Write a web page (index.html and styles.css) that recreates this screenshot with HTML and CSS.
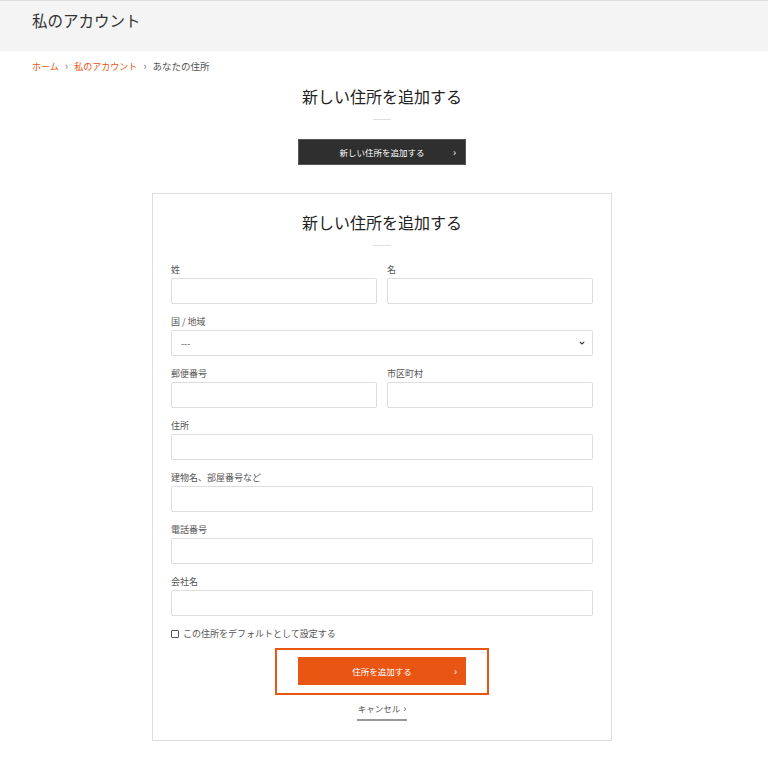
FILE: index.html
```html
<!DOCTYPE html>
<html lang="ja">
<head>
  <meta charset="UTF-8">
  <meta name="viewport" content="width=device-width, initial-scale=1.0">
  <title>私のアカウント</title>
  <link rel="stylesheet" href="styles.css">
</head>
<body>

  <header class="page-header">
    <h1 class="page-title">私のアカウント</h1>
  </header>

  <nav class="breadcrumb">
    <a href="#">ホーム</a>
    <span class="sep">&#8250;</span>
    <a href="#">私のアカウント</a>
    <span class="sep">&#8250;</span>
    <span class="current">あなたの住所</span>
  </nav>

  <main class="content">
    <h2 class="section-title">新しい住所を追加する</h2>
    <div class="title-rule"></div>

    <button class="btn btn-dark" type="button">
      <span>新しい住所を追加する</span>
      <span class="btn-arrow">&#8250;</span>
    </button>

    <form class="address-card">
      <h2 class="section-title">新しい住所を追加する</h2>
      <div class="title-rule"></div>

      <div class="field-row">
        <label class="field">
          <span class="field-label">姓</span>
          <input type="text">
        </label>
        <label class="field">
          <span class="field-label">名</span>
          <input type="text">
        </label>
      </div>

      <label class="field">
        <span class="field-label">国 / 地域</span>
        <span class="select-wrap">
          <select>
            <option>---</option>
          </select>
          <svg class="select-icon" width="8" height="6" viewBox="0 0 8 6">
            <path d="M1.8 1.8 L4 4 L6.2 1.8" fill="none" stroke="#333" stroke-width="1.1"/>
          </svg>
        </span>
      </label>

      <div class="field-row">
        <label class="field">
          <span class="field-label">郵便番号</span>
          <input type="text">
        </label>
        <label class="field">
          <span class="field-label">市区町村</span>
          <input type="text">
        </label>
      </div>

      <label class="field">
        <span class="field-label">住所</span>
        <input type="text">
      </label>

      <label class="field">
        <span class="field-label">建物名、部屋番号など</span>
        <input type="text">
      </label>

      <label class="field">
        <span class="field-label">電話番号</span>
        <input type="text">
      </label>

      <label class="field">
        <span class="field-label">会社名</span>
        <input type="text">
      </label>

      <label class="check-row">
        <span class="check-box"></span>
        <span>この住所をデフォルトとして設定する</span>
      </label>

      <div class="submit-area">
        <div class="submit-highlight">
          <button class="btn btn-orange" type="submit">
            <span>住所を追加する</span>
            <span class="btn-arrow">&#8250;</span>
          </button>
        </div>
      </div>

      <a class="cancel-link" href="#">キャンセル <span class="cancel-arrow">&#8250;</span></a>
    </form>
  </main>

</body>
</html>
```

FILE: styles.css
```css
body {
  margin: 0;
  padding: 0;
  background-color: #ffffff;
  color: #333333;
  font-family: 'Noto Sans CJK JP', 'Noto Sans', sans-serif;
}

.page-header {
  height: 51px;
  background-color: #f4f4f4;
  border-top: 1px solid #dddddd;
  box-sizing: border-box;
  padding: 7px 0 0 32px;
}

.page-title {
  margin: 0;
  font-size: 15.5px;
  font-weight: 400;
  line-height: 24px;
  color: #333333;
}

.breadcrumb {
  height: 14px;
  padding: 7px 0 0 32px;
  font-size: 9px;
  line-height: 14px;
  color: #555555;
}

.breadcrumb a {
  color: #e95513;
  text-decoration: none;
}

.breadcrumb .sep {
  color: #777777;
  margin: 0 4px;
  font-size: 11px;
  line-height: 14px;
}

.breadcrumb .current {
  font-size: 9.5px;
}

.content {
  width: 460px;
  margin: 0 auto;
  padding: 11px 0 0 0;
  display: flex;
  flex-direction: column;
  align-items: center;
  position: relative;
  left: -2px;
}

.section-title {
  margin: 0;
  font-size: 16px;
  font-weight: 400;
  line-height: 26px;
  color: #222222;
  text-align: center;
}

.title-rule {
  width: 18px;
  height: 1px;
  background-color: #dddddd;
  margin: 10px 0 0 0;
}

.btn {
  display: flex;
  align-items: center;
  justify-content: center;
  position: relative;
  width: 168px;
  height: 28px;
  border: none;
  padding: 0;
  font-family: inherit;
  font-size: 8.5px;
  color: #ffffff;
  cursor: pointer;
}

.btn-dark {
  height: 26px;
  margin-top: 19px;
  background-color: #2f2f2f;
  border: 1px solid #555555;
}

.btn-orange {
  background-color: #e95513;
}

.btn-arrow {
  position: absolute;
  right: 9px;
  top: 50%;
  transform: translateY(-55%);
  font-size: 10px;
}

.address-card {
  width: 460px;
  box-sizing: border-box;
  margin-top: 28px;
  border: 1px solid #dddddd;
  padding: 15px 18px 19px 18px;
  display: flex;
  flex-direction: column;
  align-items: center;
}

.address-card .title-rule {
  margin-bottom: 17px;
}

.field-row {
  display: flex;
  gap: 10px;
  width: 100%;
}

.field-row .field {
  flex: 1;
}

.field {
  display: flex;
  flex-direction: column;
  width: 100%;
  margin-bottom: 11px;
}

.field-label {
  font-size: 9px;
  line-height: 14px;
  color: #555555;
  margin-bottom: 1px;
}

.field input,
.field select {
  display: block;
  height: 26px;
  width: 100%;
  box-sizing: border-box;
  border: 1px solid #dddddd;
  border-radius: 2px;
  background-color: #ffffff;
  font-family: inherit;
  font-size: 9px;
  color: #555555;
  padding: 0 9px;
  margin: 0;
}

.select-wrap {
  position: relative;
  display: block;
}

.field select {
  appearance: none;
  -webkit-appearance: none;
}

.select-icon {
  position: absolute;
  right: 7px;
  top: 10px;
}

.check-row {
  display: flex;
  align-items: center;
  gap: 4px;
  width: 100%;
  font-size: 9px;
  line-height: 14px;
  color: #555555;
}

.check-box {
  width: 6px;
  height: 6px;
  border: 1px solid #555555;
  border-radius: 1px;
}

.submit-area {
  margin-top: 7px;
}

.submit-highlight {
  border: 2px solid #e95513;
  padding: 7px 21px 8px 21px;
}

.cancel-link {
  margin-top: 6px;
  font-size: 8.5px;
  line-height: 14px;
  color: #555555;
  text-decoration: none;
  white-space: nowrap;
  padding: 0 1px 4px 1px;
  border-bottom: 2px solid #999999;
}

.cancel-arrow {
  font-size: 10px;
  margin-left: 1px;
}
```
